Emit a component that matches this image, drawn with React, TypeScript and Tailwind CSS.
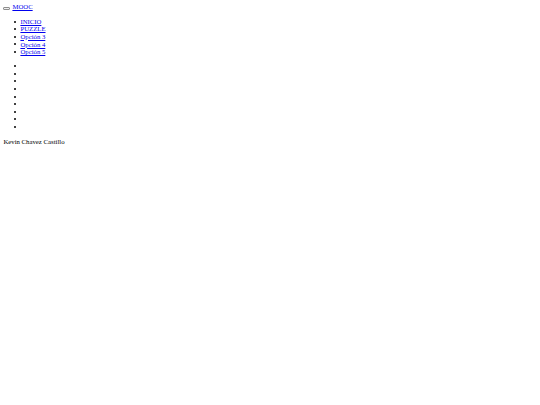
function Dot() {
  return <span className="inline-block h-[2px] w-[2px] shrink-0 rounded-full bg-black" />;
}

export default function App() {
  const menu = ["INICIO", "PUZZLE", "Opción 3", "Opción 4", "Opción 5"];
  const empty = Array.from({ length: 9 });

  return (
    <div className="min-h-[405px] w-[540px] bg-white p-[3.4px] font-['Liberation_Serif',serif] text-[6.75px] leading-[7.6px] text-black antialiased">
      <header>
        <div className="flex items-center">
          <button
            type="button"
            className="mr-[2px] mt-[3px] inline-block h-[3px] w-[7px] rounded-[1px] border-[0.5px] border-[#8f8f8f] bg-[#efefef]"
          />
          <a href="#" className="text-[#0000ee] underline">
            MOOC
          </a>
        </div>
        <ul className="my-[6.75px] pl-[10.5px]">
          {menu.map((item) => (
            <li key={item} className="flex h-[7.6px] items-center gap-[4.5px]">
              <Dot />
              <a href="#" className="text-[#0000ee] underline">
                {item}
              </a>
            </li>
          ))}
        </ul>
      </header>

      <ul className="my-[6.75px] pl-[10.5px]">
        {empty.map((_, i) => (
          <li key={i} className="flex h-[7.6px] items-center">
            <Dot />
          </li>
        ))}
      </ul>

      <footer className="mt-[6.75px]">Kevin Chavez Castillo</footer>
    </div>
  );
}
